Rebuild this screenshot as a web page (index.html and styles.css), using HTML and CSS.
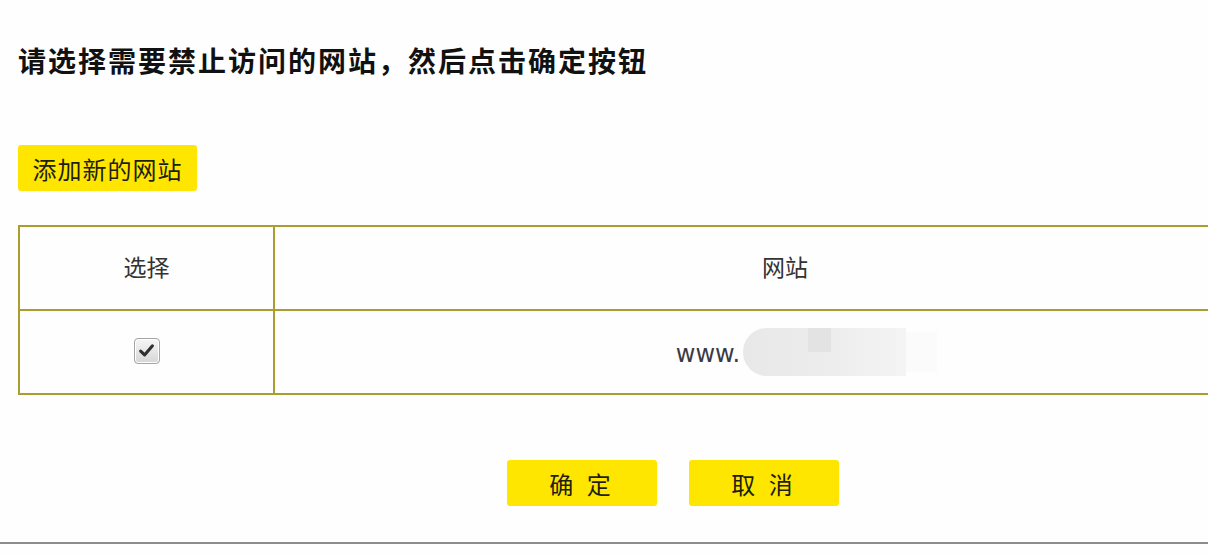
FILE: index.html
```html
<!DOCTYPE html>
<html lang="zh-CN">
<head>
<meta charset="utf-8">
<title>网站过滤</title>
<link rel="stylesheet" href="styles.css">
</head>
<body>
<div class="page">
  <h1 class="title">请选择需要禁止访问的网站，然后点击确定按钮</h1>
  <div class="add-row"><button class="btn-add" type="button">添加新的网站</button></div>
  <div class="table-clip">
    <table class="sites">
      <tr class="head">
        <th class="col-sel">选择</th>
        <th class="col-site">网站</th>
      </tr>
      <tr class="row">
        <td class="col-sel"><span class="check"><svg viewBox="0 0 16 16" width="17" height="17"><path d="M2.5 8.6 L6.2 12.2 L13.6 3.6" fill="none" stroke="#2f2f2f" stroke-width="2.9" stroke-linecap="round" stroke-linejoin="round"/></svg></span></td>
        <td class="col-site"><span class="url"><span class="www">www.</span><span class="redact"></span></span></td>
      </tr>
    </table>
  </div>
  <div class="actions">
    <button class="btn" type="button">确 定</button>
    <button class="btn" type="button">取 消</button>
  </div>
</div>
<div class="rule"></div>
</body>
</html>
```
FILE: styles.css
```css
html, body {
  margin: 0;
  padding: 0;
  background: #fefefe;
  overflow: hidden;
}
body {
  width: 1208px;
  height: 554px;
  font-family: "Noto Sans CJK SC", sans-serif;
  color: #222;
}
.page {
  padding: 40px 0 0 18px;
  box-sizing: border-box;
}
.title {
  margin: 0;
  font-size: 28px;
  line-height: 40px;
  font-weight: 700;
  letter-spacing: 2px;
  color: #111;
  white-space: nowrap;
}
.add-row {
  margin-top: 65px;
  display: flex;
}
.btn-add {
  width: 179px;
  height: 46px;
  border: 0;
  border-radius: 3px;
  background: #ffe600;
  font-family: "Noto Sans CJK SC", sans-serif;
  font-size: 24px;
  color: #1e1e10;
  padding: 0;
  letter-spacing: 1px;
}
.table-clip {
  margin-top: 34px;
  width: 1190px;
  overflow: hidden;
}
.sites {
  border-collapse: collapse;
  width: 1279px;
  table-layout: fixed;
}
.sites th, .sites td {
  border: 2px solid #a99e2e;
  text-align: center;
  vertical-align: middle;
  padding: 0;
  font-weight: 400;
}
.sites th {
  height: 78px;
  font-size: 23px;
  color: #333;
  padding-bottom: 4px;
}
.sites td {
  height: 82px;
}
.col-sel { width: 253px; }
.check {
  display: inline-flex;
  align-items: center;
  justify-content: center;
  width: 24px;
  height: 24px;
  border: 1px solid #a5a5a5;
  border-radius: 4px;
  background: linear-gradient(#f6f6f6, #d6d6d6);
  box-shadow: inset 0 0 0 1px #fff;
  margin-top: -5px;
}
.url {
  display: inline-flex;
  align-items: center;
  margin-right: -12px;
}
.www {
  font-family: "DejaVu Sans", sans-serif;
  font-size: 24px;
  color: #3a3a44;
  margin-right: 3px;
  margin-top: 4px;
}
.redact {
  display: inline-block;
  width: 163px;
  height: 48px;
  border-radius: 24px 0 0 24px;
  background:
    linear-gradient(#e3e3e3, #e3e3e3) 65px 0 / 23px 24px no-repeat,
    linear-gradient(90deg, #e8e8e8 0, #eaeaea 35px, #ebebeb 65px, #ededed 88px, #efefef 110px, #f1f1f1 130px, #f4f4f4 163px);
  box-shadow: 35px 0 0 -4px #fbfbfb;
}
.actions {
  margin-top: 65px;
  padding-left: 489px;
  display: flex;
  gap: 32px;
}
.btn {
  width: 150px;
  height: 46px;
  border: 0;
  border-radius: 3px;
  background: #ffe600;
  font-family: "Noto Sans CJK SC", sans-serif;
  font-size: 24px;
  color: #1e1e10;
  padding: 0;
  letter-spacing: 4px;
}
.rule {
  margin-top: 36px;
  height: 2px;
  background: #8c8c8c;
}
```
